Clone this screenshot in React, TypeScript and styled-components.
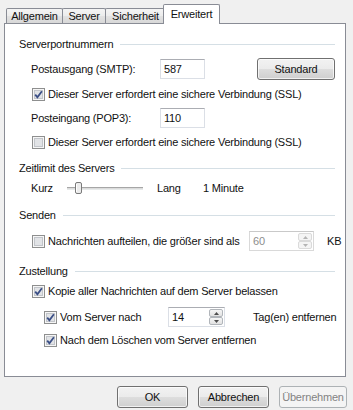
import React from "react";
import styled, { createGlobalStyle } from "styled-components";

const GlobalStyle = createGlobalStyle`
  html, body {
    margin: 0;
    padding: 0;
    background: #f0f0f0;
  }
  body {
    font-family: "Liberation Sans", Arial, sans-serif;
    font-size: 11px;
    letter-spacing: -0.2px;
    color: #111;
  }
  * {
    box-sizing: border-box;
  }
`;

function CheckBox({ checked }: { checked?: boolean }) {
  return (
    <Box>
      <svg width="13" height="13" viewBox="0 0 13 13">
        <rect x="0.5" y="0.5" width="12" height="12" fill="#f6f6f6" stroke="#8e8f8f" />
        <rect x="2.5" y="2.5" width="8" height="8" fill="#e1e3e6" stroke="#c2c5ca" />
        {checked && (
          <path
            d="M3.2 6.6 L5.4 9.2 L9.9 3.3"
            fill="none"
            stroke="#3b4f86"
            strokeWidth="1.8"
          />
        )}
      </svg>
    </Box>
  );
}

function SpinBox({ value, width, disabled }: { value: string; width: number; disabled?: boolean }) {
  return (
    <Spin $w={width} $disabled={disabled}>
      <SpinValue $disabled={disabled}>{value}</SpinValue>
      <Arrows>
        <Arrow $disabled={disabled}>
          <svg width="5" height="3" viewBox="0 0 5 3">
            <path d="M0 3 L2.5 0 L5 3 Z" fill={disabled ? "#b4b4b4" : "#4d4d4d"} />
          </svg>
        </Arrow>
        <Arrow $disabled={disabled}>
          <svg width="5" height="3" viewBox="0 0 5 3">
            <path d="M0 0 L2.5 3 L5 0 Z" fill={disabled ? "#b4b4b4" : "#4d4d4d"} />
          </svg>
        </Arrow>
      </Arrows>
    </Spin>
  );
}

function Group({ title, top }: { title: string; top: number }) {
  return (
    <GroupHeader $mt={top}>
      <span>{title}</span>
      <Rule />
    </GroupHeader>
  );
}

export default function App() {
  return (
    <Dialog>
      <GlobalStyle />
      <TabStrip>
        <Tab $w={57}>Allgemein</Tab>
        <Tab $w={44}>Server</Tab>
        <Tab $w={61}>Sicherheit</Tab>
        <Tab $w={57} $active>
          Erweitert
        </Tab>
      </TabStrip>

      <Panel>
        <Group title="Serverportnummern" top={0} />
        <Row $mt={5} $indent={12}>
          <Label $w={129}>Postausgang (SMTP):</Label>
          <TextBox>587</TextBox>
          <Button $w={78} $push>Standard</Button>
        </Row>
        <Row $mt={5} $indent={13}>
          <CheckBox checked />
          <Text>Dieser Server erfordert eine sichere Verbindung (SSL)</Text>
        </Row>
        <Row $mt={4} $indent={12}>
          <Label $w={129}>Posteingang (POP3):</Label>
          <TextBox>110</TextBox>
        </Row>
        <Row $mt={4} $indent={13}>
          <CheckBox />
          <Text>Dieser Server erfordert eine sichere Verbindung (SSL)</Text>
        </Row>

        <Group title="Zeitlimit des Servers" top={6} />
        <Row $mt={0} $indent={12}>
          <Label $w={36}>Kurz</Label>
          <Slider>
            <Track />
            <Thumb>
              <svg width="7" height="12" viewBox="0 0 7 12">
                <rect x="0.5" y="0.5" width="6" height="11" rx="1.5" fill="#ececec" stroke="#7a7a7a" />
                <line x1="1.5" y1="2" x2="1.5" y2="10" stroke="#fff" />
              </svg>
            </Thumb>
          </Slider>
          <Label $w={46}>Lang</Label>
          <Label>1 Minute</Label>
        </Row>

        <Group title="Senden" top={7} />
        <Row $mt={6} $indent={13}>
          <CheckField $w={217}>
            <CheckBox />
            <Text>Nachrichten aufteilen, die größer sind als</Text>
          </CheckField>
          <SpinBox value="60" width={65} disabled />
          <Label $gap={13}>KB</Label>
        </Row>

        <Group title="Zustellung" top={10} />
        <Row $mt={0} $indent={13}>
          <CheckBox checked />
          <Text>Kopie aller Nachrichten auf dem Server belassen</Text>
        </Row>
        <Row $mt={6} $indent={25}>
          <CheckField $w={124}>
            <CheckBox checked />
            <Text>Vom Server nach</Text>
          </CheckField>
          <SpinBox value="14" width={57} />
          <Label $gap={28}>Tag(en) entfernen</Label>
        </Row>
        <Row $mt={3} $indent={25}>
          <CheckBox checked />
          <Text>Nach dem Löschen vom Server entfernen</Text>
        </Row>
      </Panel>

      <ButtonBar>
        <Button $w={71}>OK</Button>
        <Button $w={71}>Abbrechen</Button>
        <Button $w={68} disabled>
          Übernehmen
        </Button>
      </ButtonBar>
    </Dialog>
  );
}

const Dialog = styled.div`
  width: 353px;
  height: 410px;
  display: flex;
  flex-direction: column;
  background: #f0f0f0;
`;

const TabStrip = styled.div`
  display: flex;
  align-items: flex-end;
  height: 23px;
  padding-left: 6px;
`;

const Tab = styled.div<{ $w: number; $active?: boolean }>`
  position: relative;
  width: ${(p) => p.$w}px;
  height: ${(p) => (p.$active ? 20 : 15)}px;
  margin: ${(p) => (p.$active ? "0 0 -1px -3px" : "0 0 0 -1px")};
  padding-top: ${(p) => (p.$active ? 2 : 0)}px;
  border: 1px solid #898c95;
  border-bottom: none;
  border-radius: 2px 2px 0 0;
  background: ${(p) =>
    p.$active ? "#fff" : "linear-gradient(#f4f4f4, #ececec 50%, #e2e2e2 51%, #d8d8d8)"};
  line-height: 14px;
  text-align: center;
  z-index: ${(p) => (p.$active ? 2 : 0)};
  &:first-child {
    margin-left: 0;
  }
`;

const Panel = styled.div`
  height: 354px;
  margin: 0 7px 0 4px;
  padding: 10px 10px 0 14px;
  border: 1px solid #898c95;
  background: #fff;
  display: flex;
  flex-direction: column;
`;

const GroupHeader = styled.div<{ $mt: number }>`
  display: flex;
  align-items: center;
  gap: 7px;
  height: 20px;
  margin-top: ${(p) => p.$mt}px;
`;

const Rule = styled.div`
  flex: 1;
  height: 1px;
  background: #d5dfe5;
`;

const Row = styled.div<{ $mt: number; $indent: number }>`
  display: flex;
  align-items: center;
  height: 20px;
  margin-top: ${(p) => p.$mt}px;
  padding-left: ${(p) => p.$indent}px;
`;

const Label = styled.span<{ $w?: number; $gap?: number }>`
  flex: none;
  width: ${(p) => (p.$w ? `${p.$w}px` : "auto")};
  margin-left: ${(p) => p.$gap ?? 0}px;
  white-space: nowrap;
`;

const Text = styled.span`
  margin-left: 3px;
  white-space: nowrap;
`;

const CheckField = styled.div<{ $w: number }>`
  display: flex;
  align-items: center;
  width: ${(p) => p.$w}px;
  flex: none;
`;

const Box = styled.span`
  display: flex;
  width: 13px;
  height: 13px;
  flex: none;
`;

const TextBox = styled.div`
  width: 45px;
  height: 20px;
  padding: 0 3px;
  line-height: 18px;
  border: 1px solid #dbdfe6;
  border-top-color: #abadb3;
  background: #fff;
`;

const Button = styled.button<{ $w: number; $push?: boolean }>`
  width: ${(p) => p.$w}px;
  height: 22px;
  margin-left: ${(p) => (p.$push ? "auto" : "0")};
  padding: 0;
  border: 1px solid #707070;
  border-radius: 3px;
  background: linear-gradient(#f2f2f2, #ebebeb 50%, #dddddd 51%, #cfcfcf);
  box-shadow: inset 0 0 0 1px rgba(255, 255, 255, 0.7);
  font: inherit;
  letter-spacing: inherit;
  color: #111;
  &:disabled {
    border-color: #adb2b5;
    background: #f4f4f4;
    box-shadow: none;
    color: #838383;
  }
`;

const Slider = styled.div`
  display: flex;
  align-items: center;
  width: 90px;
  height: 20px;
  flex: none;
  padding-right: 14px;
  position: relative;
`;

const Track = styled.div`
  flex: 1;
  height: 3px;
  border-top: 1px solid #a6a6a6;
  border-bottom: 1px solid #e7eaea;
  background: #dcdcdc;
`;

const Thumb = styled.div`
  position: absolute;
  left: 8px;
  top: 4px;
  display: flex;
`;

const Spin = styled.div<{ $w: number; $disabled?: boolean }>`
  display: flex;
  width: ${(p) => p.$w}px;
  height: 20px;
  flex: none;
  border: 1px solid ${(p) => (p.$disabled ? "#d9d9d9" : "#dbdfe6")};
  border-top-color: ${(p) => (p.$disabled ? "#c9c9c9" : "#abadb3")};
  background: #fff;
`;

const SpinValue = styled.div<{ $disabled?: boolean }>`
  flex: 1;
  padding: 0 3px;
  line-height: 18px;
  color: ${(p) => (p.$disabled ? "#8d8d8d" : "#111")};
`;

const Arrows = styled.div`
  display: flex;
  flex-direction: column;
  width: 15px;
  padding: 1px 1px 1px 0;
`;

const Arrow = styled.div<{ $disabled?: boolean }>`
  flex: 1;
  display: flex;
  align-items: center;
  justify-content: center;
  border: 1px solid ${(p) => (p.$disabled ? "#dadada" : "#b1b5ba")};
  border-radius: 2px;
  background: ${(p) => (p.$disabled ? "#f4f4f4" : "linear-gradient(#f6f6f6, #e2e2e2)")};
`;

const ButtonBar = styled.div`
  display: flex;
  justify-content: flex-end;
  gap: 10px;
  padding: 9px 6px 0 0;
`;
